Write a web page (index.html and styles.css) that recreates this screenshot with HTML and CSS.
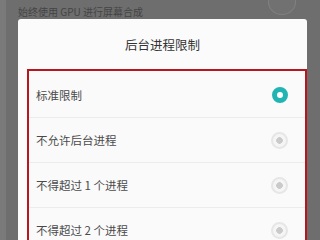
FILE: index.html
```html
<!DOCTYPE html>
<html lang="zh">
<head>
<meta charset="utf-8">
<link rel="stylesheet" href="styles.css">
</head>
<body>
<div class="screen">
  <div class="bg-row">
    <span class="bg-text">始终使用 GPU 进行屏幕合成</span>
    <span class="bg-toggle"></span>
  </div>
  <div class="dialog">
    <div class="title">后台进程限制</div>
    <div class="highlight">
      <div class="list">
        <div class="item"><span class="label">标准限制</span><span class="radio on"></span></div>
        <div class="item"><span class="label">不允许后台进程</span><span class="radio"></span></div>
        <div class="item"><span class="label">不得超过 1 个进程</span><span class="radio"></span></div>
        <div class="item"><span class="label">不得超过 2 个进程</span><span class="radio"></span></div>
      </div>
    </div>
  </div>
</div>
</body>
</html>
```
FILE: styles.css
```css
html, body {
  margin: 0;
  padding: 0;
}
body {
  width: 320px;
  height: 240px;
  overflow: hidden;
  background: #6f6f6f;
  font-family: "Noto Sans CJK SC", "Noto Sans", sans-serif;
}
.screen {
  width: 320px;
  height: 240px;
  overflow: hidden;
  background: linear-gradient(to right, #7a7a7a 0, #7a7a7a 6px, #6e6e6e 6px);
}
.bg-row {
  position: relative;
  height: 19px;
  padding-left: 18px;
}
.bg-text {
  display: block;
  font-size: 10px;
  line-height: 10px;
  padding-top: 7px;
  color: #444;
}
.bg-toggle {
  position: absolute;
  left: 268px;
  top: -11px;
  width: 26px;
  height: 24px;
  border-radius: 50%;
  border: 1px solid #808080;
  background: #717171;
}
.dialog {
  margin-left: 18px;
  width: 289px;
  height: 240px;
  background: #fbfbfb;
  border-radius: 3px 3px 0 0;
}
.title {
  height: 50px;
  display: flex;
  align-items: center;
  justify-content: center;
  font-size: 12.5px;
  color: #333;
}
.highlight {
  margin-left: 9px;
  border: 2px solid #b8161c;
  border-bottom: none;
  height: 200px;
  background: #fafafa;
}
.list {
  padding-top: 2px;
}
.item {
  height: 44px;
  border-bottom: 1px solid #ececec;
  display: flex;
  align-items: center;
  justify-content: space-between;
  padding-left: 7px;
  padding-right: 18px;
}
.label {
  font-size: 11.5px;
  color: #4a4a4a;
}
.radio {
  width: 13px;
  height: 13px;
  margin-right: -1px;
  border-radius: 50%;
  border: 2px solid #e6e6e6;
  background: radial-gradient(circle, #cacaca 0, #cacaca 3px, #f5f5f5 3.6px);
}
.radio.on {
  width: 6px;
  height: 6px;
  margin-right: -1px;
  border: 5px solid #22b4b3;
  background: #ffffff;
}
```
